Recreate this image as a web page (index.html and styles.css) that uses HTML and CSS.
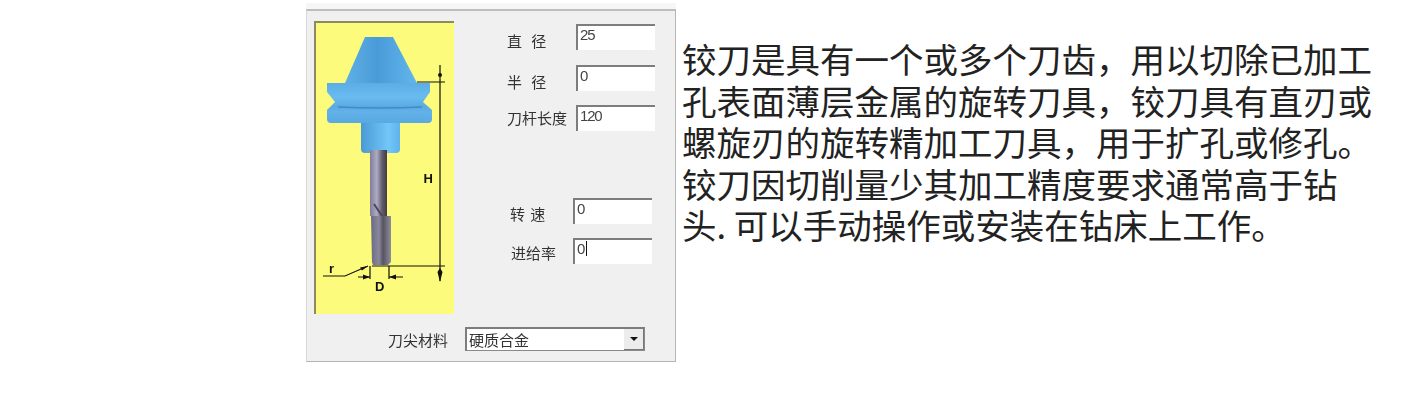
FILE: index.html
```html
<!DOCTYPE html>
<html lang="zh-CN">
<head>
    <meta charset="UTF-8">
    <title>铰刀</title>
    <link rel="stylesheet" href="styles.css">
</head>
<body>
    <div class="page">
        <div class="dialog">
            <div class="dialog-top"></div>
            <div class="dialog-body">
                <div class="dialog-main">
                    <svg class="tool-pic" viewBox="316 23 138 291" width="138" height="291">
                        <defs>
                            <linearGradient id="cone" x1="0" x2="1" y1="0" y2="0">
                                <stop offset="0" stop-color="#5fb0e6"/>
                                <stop offset="0.45" stop-color="#4a9bd8"/>
                                <stop offset="1" stop-color="#62b6ec"/>
                            </linearGradient>
                            <linearGradient id="flange" x1="0" x2="0" y1="0" y2="1">
                                <stop offset="0" stop-color="#5cade5"/>
                                <stop offset="0.35" stop-color="#6abbf0"/>
                                <stop offset="0.6" stop-color="#5aaae2"/>
                                <stop offset="0.72" stop-color="#62b2e8"/>
                                <stop offset="1" stop-color="#59a9e2"/>
                            </linearGradient>
                            <linearGradient id="neck" x1="0" x2="1" y1="0" y2="0">
                                <stop offset="0" stop-color="#4a9ad6"/>
                                <stop offset="0.7" stop-color="#72c6f8"/>
                                <stop offset="1" stop-color="#5fb3ea"/>
                            </linearGradient>
                            <linearGradient id="shank" x1="0" x2="1" y1="0" y2="0">
                                <stop offset="0" stop-color="#7f7d98"/>
                                <stop offset="0.4" stop-color="#aeabc4"/>
                                <stop offset="0.72" stop-color="#5f5a6a"/>
                                <stop offset="1" stop-color="#443c44"/>
                            </linearGradient>
                            <linearGradient id="flute" x1="0" x2="1" y1="0" y2="0">
                                <stop offset="0" stop-color="#6a6a82"/>
                                <stop offset="0.4" stop-color="#8a889f"/>
                                <stop offset="0.6" stop-color="#57535f"/>
                                <stop offset="1" stop-color="#8f8d9e"/>
                            </linearGradient>
                            <filter id="soft" x="-5%" y="-5%" width="110%" height="110%">
                                <feGaussianBlur stdDeviation="0.6"/>
                            </filter>
                        </defs>
                        <g filter="url(#soft)">
                            <path d="M361 122H400V149Q400 153 396 153H365Q361 153 361 149Z" fill="url(#neck)"/>
                            <path d="M365 37H393L417 83H345Z" fill="url(#cone)"/>
                            <path d="M327 83H430V92L423 102L432 110V119Q432 123 428 123H331Q327 123 327 119V110L335 102L327 92Z" fill="url(#flange)"/>
                            <path d="M338 107Q380 109 422 107" stroke="#3f8bc8" stroke-width="1.5" fill="none"/>
                            <rect x="370" y="150" width="17" height="66" fill="url(#shank)"/>
                            <path d="M371 216H391V262L388 265H373L372 262Z" fill="url(#flute)"/>
                            <path d="M374 204L382 216" stroke="#4b4855" stroke-width="2" fill="none"/>
                        </g>
                        <g stroke="#111" fill="none" stroke-width="1.2">
                            <path d="M440 65V281M417 82H445M372 266H445"/>
                            <path d="M323 276H345L368 266M370 266V279M389 266V279"/>
                            <path d="M358 277H370M389 277H403"/>
                        </g>
                        <g fill="#111">
                            <circle cx="440" cy="75" r="2"/>
                            <path d="M440 282L437.5 272L440 268L442.5 272ZM370 277L363 274.5V279.5ZM389 277L396 274.5V279.5ZM368 266L360 267.5L362 270.5Z"/>
                        </g>
                        <text class="pic-label" x="423.5" y="183">H</text>
                        <text class="pic-label" x="329" y="273">r</text>
                        <text class="pic-label" x="375" y="291">D</text>
                    </svg>
                    <div class="fields">
                        <div class="row"><span class="label">直 径</span><div class="input">25</div></div>
                        <div class="row"><span class="label">半 径</span><div class="input">0</div></div>
                        <div class="row"><span class="label">刀杆长度</span><div class="input">120</div></div>
                        <div class="row row-low"><span class="label">转 速</span><div class="input">0</div></div>
                        <div class="row row-last"><span class="label">进给率</span><div class="input">0<i class="caret"></i></div></div>
                    </div>
                </div>
                <div class="material">
                    <span class="label-material">刀尖材料</span>
                    <div class="select">
                        <span>硬质合金</span>
                        <div class="select-btn"><i class="select-arrow"></i></div>
                    </div>
                </div>
            </div>
        </div>
        <div class="desc">
            铰刀是具有一个或多个刀齿，用以切除已加工<br>
            孔表面薄层金属的旋转刀具，铰刀具有直刃或<br>
            螺旋刃的旋转精加工刀具，用于扩孔或修孔。<br>
            铰刀因切削量少其加工精度要求通常高于钻<br>
            头. 可以手动操作或安装在钻床上工作。
        </div>
    </div>
</body>
</html>
```

FILE: styles.css
```css
/* ======= General ======= */
body {
    margin: 0;
    background: #fff;
    font-family: "Noto Sans CJK SC", "Noto Sans", sans-serif;
    color: #222;
}

.page {
    display: flex;
    align-items: flex-start;
    padding-left: 306px;
}

/* ======= Dialog ======= */
.dialog {
    width: 370px;
    margin-top: 3px;
    flex-shrink: 0;
    filter: blur(0.5px);
}

.dialog-top {
    height: 6px;
    background: #f6f6f6;
}

.dialog-body {
    box-sizing: border-box;
    height: 353px;
    padding: 12px 0 0 9px;
    background: #f0f0f0;
    border-top: 2px solid #bdbdbd;
    border-right: 1px solid #b5b5b5;
    border-bottom: 1px solid #b5b5b5;
    border-left: 1px solid #d8d8d8;
}

.dialog-main {
    display: flex;
    align-items: flex-start;
}

.tool-pic {
    display: block;
    flex-shrink: 0;
    background: #fdfb7c;
    border-top: 2px solid #8c8a5e;
    border-left: 2px solid #8c8a5e;
    margin: -2px 0 0 -2px;
}

.pic-label {
    font-family: "Liberation Sans", Arial, sans-serif;
    font-size: 13px;
    font-weight: bold;
    fill: #111;
}

/* ======= Fields ======= */
.fields {
    display: flex;
    flex-direction: column;
    margin: 1px 0 0 53px;
}

.row {
    display: flex;
    align-items: center;
    height: 26px;
    margin-bottom: 15px;
}

.row:nth-child(3) {
    margin-top: -1px;
}

.label {
    width: 69px;
    font-size: 15px;
    line-height: 26px;
    white-space: nowrap;
    color: #333;
}

.row:nth-child(-n+2) .label {
    word-spacing: 6px;
    padding-top: 8px;
    box-sizing: border-box;
    height: 34px;
}

.input {
    box-sizing: border-box;
    width: 79px;
    height: 26px;
    padding: 0 0 0 2px;
    background: #fff;
    border-top: 2px solid #7d7d7d;
    border-left: 2px solid #7d7d7d;
    font-family: "Liberation Sans", Arial, sans-serif;
    font-size: 15px;
    letter-spacing: -1.2px;
    line-height: 17px;
    color: #444;
}

.row-low {
    margin-top: 52px;
    margin-left: 3px;
    margin-bottom: 14px;
}

.row-low .label,
.row-last .label {
    width: 63px;
}

.row-low .label {
    word-spacing: 2px;
    padding-top: 6px;
    box-sizing: border-box;
    height: 32px;
}

.row-last {
    margin-left: 4px;
}

.row-last .label {
    width: 62px;
    padding-top: 4px;
    box-sizing: border-box;
    height: 30px;
}

.caret {
    display: inline-block;
    width: 1px;
    height: 15px;
    margin-left: 2px;
    vertical-align: -2px;
    background: #111;
}

/* ======= Material select ======= */
.material {
    display: flex;
    align-items: center;
    margin: 13px 0 0 72px;
}

.label-material {
    width: 77px;
    font-size: 15px;
    color: #333;
}

.select {
    box-sizing: border-box;
    display: flex;
    align-items: center;
    justify-content: space-between;
    width: 180px;
    height: 24px;
    padding-left: 2px;
    background: #fff;
    border-top: 2px solid #7d7d7d;
    border-left: 2px solid #7d7d7d;
    border-right: 1px solid #8a8a8a;
    border-bottom: 1px solid #8a8a8a;
    font-size: 15px;
    color: #333;
}

.select-btn {
    display: flex;
    align-items: center;
    justify-content: center;
    width: 20px;
    height: 21px;
    background: #ececec;
    border-right: 1px solid #777;
    border-bottom: 1px solid #777;
    box-sizing: border-box;
}

.select-arrow {
    width: 0;
    height: 0;
    border-left: 4px solid transparent;
    border-right: 4px solid transparent;
    border-top: 4px solid #111;
}

/* ======= Description ======= */
.desc {
    width: 720px;
    margin: 38px 0 0 6px;
    font-size: 34.5px;
    line-height: 41.5px;
    color: #222;
    white-space: nowrap;
}
```
